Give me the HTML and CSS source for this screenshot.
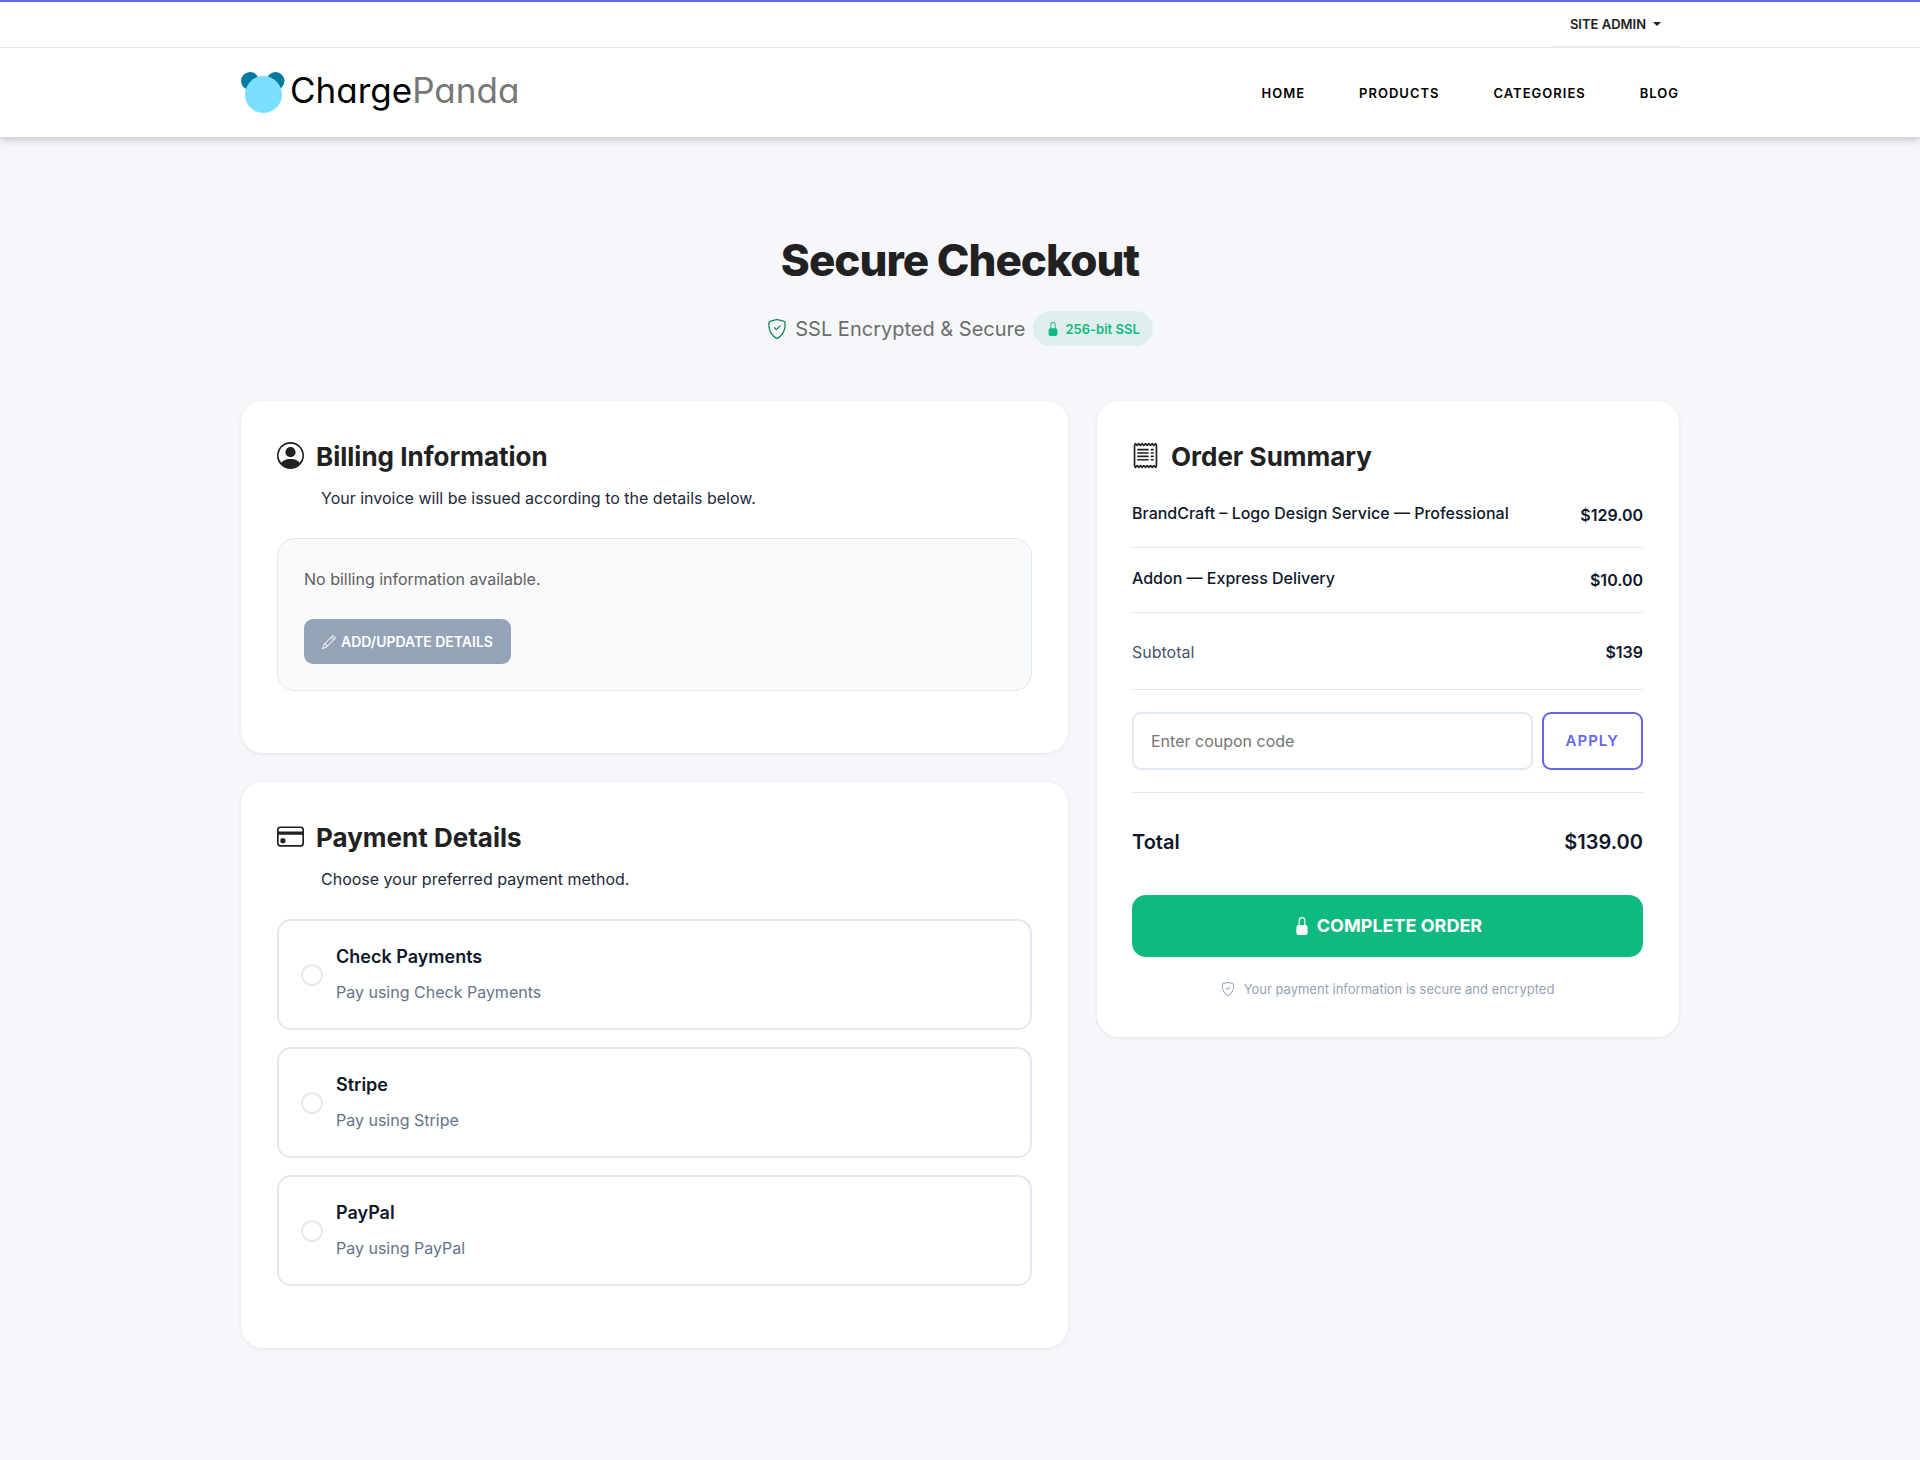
FILE: index.html
```html
<!DOCTYPE html>
<html lang="en">
<head>
<meta charset="utf-8">
<meta name="viewport" content="width=device-width, initial-scale=1">
<title>Secure Checkout – ChargePanda</title>
<link rel="stylesheet" href="styles.css">
</head>
<body>
<svg class="sprite" aria-hidden="true">
  <symbol id="shield-check" viewBox="0 0 16 16"><path d="M5.338 1.59a61 61 0 0 0-2.837.856.48.48 0 0 0-.328.39c-.554 4.157.726 7.19 2.253 9.188a10.7 10.7 0 0 0 2.287 2.233c.346.244.652.42.893.533q.18.085.293.118a1 1 0 0 0 .101.025 1 1 0 0 0 .1-.025q.114-.034.294-.118c.24-.113.547-.29.893-.533a10.7 10.7 0 0 0 2.287-2.233c1.527-1.997 2.807-5.031 2.253-9.188a.48.48 0 0 0-.328-.39c-.651-.213-1.75-.56-2.837-.855C9.552 1.29 8.531 1.067 8 1.067c-.53 0-1.552.223-2.662.524zM5.072.56C6.157.265 7.31 0 8 0s1.843.265 2.928.56c1.11.3 2.229.655 2.887.87a1.54 1.54 0 0 1 1.044 1.262c.596 4.477-.787 7.795-2.465 9.99a11.8 11.8 0 0 1-2.517 2.453 7 7 0 0 1-1.048.625c-.28.132-.581.24-.829.24s-.548-.108-.829-.24a7 7 0 0 1-1.048-.625 11.8 11.8 0 0 1-2.517-2.453C1.928 10.487.545 7.169 1.141 2.692A1.54 1.54 0 0 1 2.185 1.43 63 63 0 0 1 5.072.56"/><path d="M10.854 5.146a.5.5 0 0 1 0 .708l-3 3a.5.5 0 0 1-.708 0l-1.5-1.5a.5.5 0 1 1 .708-.708L7.5 7.793l2.646-2.647a.5.5 0 0 1 .708 0"/></symbol>
  <symbol id="lock-fill" viewBox="0 0 16 16"><path d="M8 1a2 2 0 0 1 2 2v4H6V3a2 2 0 0 1 2-2m3 6V3a3 3 0 0 0-6 0v4a2 2 0 0 0-2 2v5a2 2 0 0 0 2 2h6a2 2 0 0 0 2-2V9a2 2 0 0 0-2-2"/></symbol>
  <symbol id="person-circle" viewBox="0 0 16 16"><path d="M11 6a3 3 0 1 1-6 0 3 3 0 0 1 6 0"/><path fill-rule="evenodd" d="M0 8a8 8 0 1 1 16 0A8 8 0 0 1 0 8m8-7a7 7 0 0 0-5.468 11.37C3.242 11.226 4.805 10 8 10s4.757 1.225 5.468 2.37A7 7 0 0 0 8 1"/></symbol>
  <symbol id="credit-card" viewBox="0 0 16 16"><path d="M0 4a2 2 0 0 1 2-2h12a2 2 0 0 1 2 2v8a2 2 0 0 1-2 2H2a2 2 0 0 1-2-2zm2-1a1 1 0 0 0-1 1v1h14V4a1 1 0 0 0-1-1zm13 4H1v5a1 1 0 0 0 1 1h12a1 1 0 0 0 1-1z"/><path d="M2 10a1 1 0 0 1 1-1h1a1 1 0 0 1 1 1v1a1 1 0 0 1-1 1H3a1 1 0 0 1-1-1z"/></symbol>
  <symbol id="pencil" viewBox="0 0 16 16"><path d="M12.146.146a.5.5 0 0 1 .708 0l3 3a.5.5 0 0 1 0 .708l-10 10a.5.5 0 0 1-.168.11l-5 2a.5.5 0 0 1-.65-.65l2-5a.5.5 0 0 1 .11-.168zM11.207 2.5 13.5 4.793 14.793 3.5 12.5 1.207zm1.586 3L10.5 3.207 4 9.707V10h.5a.5.5 0 0 1 .5.5v.5h.5a.5.5 0 0 1 .5.5v.5h.293zm-9.761 5.175-.106.106-1.528 3.821 3.821-1.528.106-.106A.5.5 0 0 1 5 12.5V12h-.5a.5.5 0 0 1-.5-.5V11h-.5a.5.5 0 0 1-.468-.325"/></symbol>
  <symbol id="receipt" viewBox="0 0 16 16"><path d="M1.92.506a.5.5 0 0 1 .434.14L3 1.293l.646-.647a.5.5 0 0 1 .708 0L5 1.293l.646-.647a.5.5 0 0 1 .708 0L7 1.293l.646-.647a.5.5 0 0 1 .708 0L9 1.293l.646-.647a.5.5 0 0 1 .708 0l.646.647.646-.647a.5.5 0 0 1 .708 0l.646.647.646-.647a.5.5 0 0 1 .801.13l.5 1A.5.5 0 0 1 15 2v12a.5.5 0 0 1-.053.224l-.5 1a.5.5 0 0 1-.8.13L13 14.707l-.646.647a.5.5 0 0 1-.708 0L11 14.707l-.646.647a.5.5 0 0 1-.708 0L9 14.707l-.646.647a.5.5 0 0 1-.708 0L7 14.707l-.646.647a.5.5 0 0 1-.708 0L5 14.707l-.646.647a.5.5 0 0 1-.708 0L3 14.707l-.646.647a.5.5 0 0 1-.801-.13l-.5-1A.5.5 0 0 1 1 14V2a.5.5 0 0 1 .053-.224l.5-1a.5.5 0 0 1 .367-.27m.217 1.338L2 2.118v11.764l.137.274.51-.51a.5.5 0 0 1 .707 0l.646.647.646-.646a.5.5 0 0 1 .708 0l.646.646.646-.646a.5.5 0 0 1 .708 0l.646.646.646-.646a.5.5 0 0 1 .708 0l.646.646.646-.646a.5.5 0 0 1 .708 0l.646.646.646-.646a.5.5 0 0 1 .708 0l.509.509.137-.274V2.118l-.137-.274-.51.51a.5.5 0 0 1-.707 0L12 1.707l-.646.647a.5.5 0 0 1-.708 0L10 1.707l-.646.647a.5.5 0 0 1-.708 0L8 1.707l-.646.647a.5.5 0 0 1-.708 0L6 1.707l-.646.647a.5.5 0 0 1-.708 0L4 1.707l-.646.647a.5.5 0 0 1-.708 0z"/><path fill="none" stroke="currentColor" stroke-linecap="round" d="M3.5 4.500h6M3.500 6.500h6M3.500 8.500h6M3.500 10.500h6M11.500 4.500h1M11.500 6.500h1M11.500 8.500h1M11.500 10.500h1"/></symbol>
</svg>

<header class="site-header">
  <div class="topbar">
    <div class="container topbar-inner">
      <button class="account" type="button">SITE ADMIN <span class="caret"></span></button>
    </div>
  </div>
  <div class="container masthead">
    <a class="logo" href="#">
      <svg class="logo-mark" viewBox="0 0 44 42" aria-hidden="true">
        <circle cx="9" cy="9" r="9" fill="#007a9e"/>
        <circle cx="34.500" cy="9" r="9" fill="#007a9e"/>
        <circle cx="22.500" cy="22.500" r="18.500" fill="#7adeff"/>
      </svg>
      <span class="logo-text">Charge<span class="logo-light">Panda</span></span>
    </a>
    <nav class="nav">
      <a href="#">HOME</a>
      <a href="#">PRODUCTS</a>
      <a href="#">CATEGORIES</a>
      <a href="#">BLOG</a>
    </nav>
  </div>
</header>

<main class="container">
  <section class="hero">
    <h1>Secure Checkout</h1>
    <p class="hero-note">
      <svg class="icon icon-md icon-green"><use href="#shield-check"/></svg>
      <span>SSL Encrypted &amp; Secure</span>
      <span class="pill"><svg class="icon icon-xs"><use href="#lock-fill"/></svg>256-bit SSL</span>
    </p>
  </section>

  <div class="columns">
    <div class="stack">
      <section class="card">
        <h2><svg class="icon icon-lg"><use href="#person-circle"/></svg>Billing Information</h2>
        <p class="lead">Your invoice will be issued according to the details below.</p>
        <div class="billing-box">
          <p>No billing information available.</p>
          <button class="btn btn-muted" type="button"><svg class="icon icon-xs"><use href="#pencil"/></svg>ADD/UPDATE DETAILS</button>
        </div>
      </section>

      <section class="card">
        <h2><svg class="icon icon-lg"><use href="#credit-card"/></svg>Payment Details</h2>
        <p class="lead">Choose your preferred payment method.</p>
        <div class="methods">
          <label class="method">
            <input type="radio" name="method" value="check">
            <span><strong>Check Payments</strong><small>Pay using Check Payments</small></span>
          </label>
          <label class="method">
            <input type="radio" name="method" value="stripe">
            <span><strong>Stripe</strong><small>Pay using Stripe</small></span>
          </label>
          <label class="method">
            <input type="radio" name="method" value="paypal">
            <span><strong>PayPal</strong><small>Pay using PayPal</small></span>
          </label>
        </div>
      </section>
    </div>

    <aside class="card summary">
      <h2><svg class="icon icon-lg"><use href="#receipt"/></svg>Order Summary</h2>
      <div class="row item"><span class="name">BrandCraft – Logo Design Service — Professional</span><span class="price">$129.00</span></div>
      <div class="row item"><span class="name">Addon — Express Delivery</span><span class="price">$10.00</span></div>
      <div class="row subtotal"><span>Subtotal</span><span class="price">$139</span></div>
      <form class="coupon">
        <input type="text" placeholder="Enter coupon code" aria-label="Coupon code">
        <button class="btn btn-outline" type="button">APPLY</button>
      </form>
      <div class="row total"><span>Total</span><span>$139.00</span></div>
      <button class="btn btn-primary" type="button"><svg class="icon icon-sm"><use href="#lock-fill"/></svg>COMPLETE ORDER</button>
      <p class="secure-note"><svg class="icon icon-xs"><use href="#shield-check"/></svg>Your payment information is secure and encrypted</p>
    </aside>
  </div>
</main>
</body>
</html>
```

FILE: styles.css
```css
* { box-sizing: border-box; }

body {
  margin: 0;
  background: #f6f7fb;
  color: #0f172a;
  font: 16px/24px Inter, "Liberation Sans", sans-serif;
}

h1, h2, p { margin: 0; }
a { color: inherit; text-decoration: none; }
button, input { font: inherit; color: inherit; }
button { cursor: pointer; }

.sprite { display: none; }
.icon { flex: none; fill: currentColor; }
.icon-xs { width: 14px; height: 14px; }
.icon-sm { width: 18px; height: 18px; }
.icon-md { width: 20px; height: 20px; }
.icon-lg { width: 27px; height: 27px; }
.icon-green { color: #198754; }

.container {
  max-width: 1486px;
  margin: 0 auto;
  padding: 0 24px;
}

/* Header */
.site-header {
  position: relative;
  background: #fff;
  border-top: 2px solid #6366f1;
  box-shadow: 0 3px 8px rgba(0, 0, 0, .2);
}
.topbar { border-bottom: 1px solid #eaeaea; }
.topbar-inner { display: flex; justify-content: flex-end; }
.account {
  display: flex;
  align-items: center;
  gap: 7px;
  height: 45px;
  padding: 0 18px;
  border: 0;
  border-bottom: 1px solid #eaeaea;
  background: none;
  color: #212121;
  font-size: 13px;
  font-weight: 600;
}
.caret {
  border: 4px solid transparent;
  border-top-color: currentColor;
  border-bottom: 0;
}
.masthead {
  display: flex;
  align-items: center;
  justify-content: space-between;
  height: 89px;
}
.logo { display: flex; gap: 5px; }
.logo-mark { width: 44px; height: 42px; }
.logo-text {
  color: #000;
  font-size: 35px;
  line-height: 36px;
  font-feature-settings: "cv11";
}
.logo-light { color: #777; }
.nav { display: flex; gap: 54px; }
.nav a {
  color: #000;
  font-size: 13px;
  font-weight: 600;
  letter-spacing: 1px;
}

/* Hero */
.hero { padding: 95px 0 55px; text-align: center; }
h1 {
  color: #212121;
  font-size: 44px;
  line-height: 56px;
  font-weight: 800;
  letter-spacing: -1px;
}
.hero-note {
  display: flex;
  align-items: center;
  justify-content: center;
  gap: 8px;
  margin-top: 23px;
  color: #6c6c6c;
  font-size: 20px;
}
.pill {
  display: flex;
  align-items: center;
  gap: 5px;
  height: 35px;
  padding: 0 13px;
  border-radius: 18px;
  background: #deefee;
  color: #10b981;
  font-size: 13px;
  font-weight: 600;
}

/* Cards */
.columns {
  display: grid;
  grid-template-columns: 827fr 582fr;
  gap: 29px;
  align-items: start;
  padding-bottom: 110px;
}
.stack { display: grid; gap: 29px; }
.card {
  padding: 36px 36px 62px;
  border-radius: 22px;
  background: #fff;
  box-shadow: 0 1px 4px rgba(0, 0, 0, .08);
}
h2 {
  display: flex;
  align-items: center;
  gap: 12px;
  color: #212121;
  font-size: 26px;
  line-height: 40px;
  font-weight: 700;
}
h2 .icon { margin-bottom: 3px; }
.lead {
  margin: 9px 0 28px;
  padding-left: 44px;
  color: #1e293b;
}

.billing-box {
  padding: 26px;
  border: 1px solid #e2e8f0;
  border-radius: 18px;
  background: #f9fafc;
  color: #5f5f5f;
  line-height: 28px;
}
.btn {
  display: flex;
  align-items: center;
  justify-content: center;
  border: 0;
  font-weight: 600;
}
.btn-muted {
  gap: 5px;
  height: 45px;
  margin-top: 26px;
  padding: 0 18px;
  border-radius: 9px;
  background: #94a3b8;
  color: #fff;
  font-size: 14px;
}

.methods { display: grid; gap: 17px; }
.method {
  display: flex;
  align-items: center;
  gap: 13px;
  padding: 18px 22px;
  border: 2px solid #e2e8f0;
  border-radius: 14px;
}
.method input {
  appearance: none;
  width: 22px;
  height: 22px;
  margin: 0;
  border: 2px solid #e2e8f0;
  border-radius: 50%;
}
.method input:checked { border: 6px solid #6366f1; }
.method strong, .method small { display: block; font-size: 16px; }
.method strong { font-size: 18px; line-height: 36px; font-weight: 600; }
.method small { color: #64748b; line-height: 35px; }

/* Order summary */
.summary { padding: 36px 36px 36px 35px; }
.row {
  display: flex;
  justify-content: space-between;
  gap: 16px;
  border-bottom: 1px solid #e2e8f0;
}
.item { padding: 20px 0; }
.item:first-of-type { margin-top: 6px; }
.name { line-height: 20px; font-weight: 500; }
.price { font-weight: 600; }
.subtotal { padding: 27px 0 25px; }
.subtotal span:first-child { color: #475569; }
.coupon {
  display: flex;
  gap: 9px;
  padding: 22px 0;
  border-bottom: 1px solid #e2e8f0;
}
.coupon input {
  flex: 1;
  min-width: 0;
  height: 58px;
  padding: 0 17px;
  border: 2px solid #e2e8f0;
  border-radius: 9px;
  background: #fff;
}
.coupon input::placeholder { color: #757575; }
.btn-outline {
  padding: 0 22px;
  border: 2px solid #6366f1;
  border-radius: 9px;
  background: #fff;
  color: #6366f1;
  font-size: 15px;
  letter-spacing: 1px;
}
.total {
  padding: 35px 0 39px;
  border: 0;
  font-size: 20px;
  line-height: 28px;
  font-weight: 600;
}
.btn-primary {
  gap: 6px;
  width: 100%;
  height: 62px;
  border-radius: 14px;
  background: #10b981;
  color: #fff;
  font-size: 18px;
  font-weight: 700;
}
.secure-note {
  display: flex;
  align-items: center;
  justify-content: center;
  gap: 9px;
  margin-top: 20px;
  color: #94a3b8;
  font-size: 13px;
}
```
